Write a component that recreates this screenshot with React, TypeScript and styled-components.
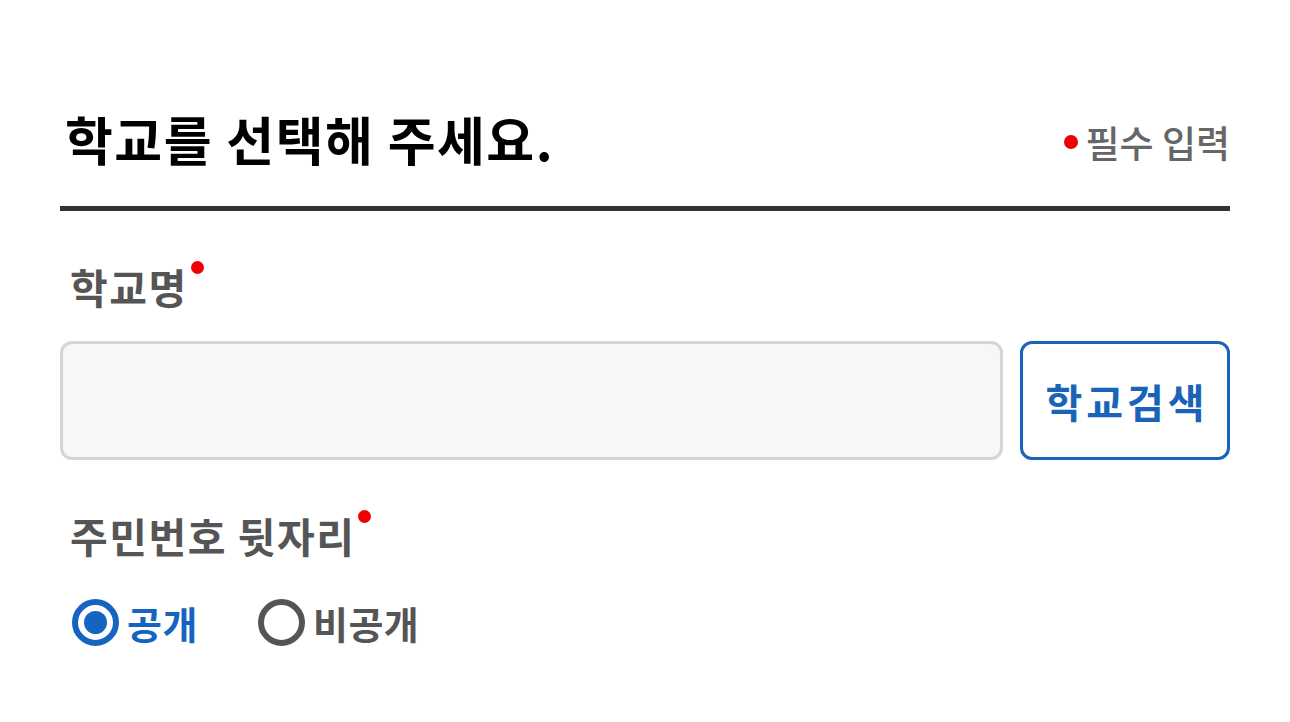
import styled, { createGlobalStyle } from "styled-components";

const GlobalStyle = createGlobalStyle`
  html, body {
    margin: 0;
    padding: 0;
    background: #ffffff;
    font-family: "Noto Sans CJK KR", "Noto Sans", sans-serif;
  }
`;

const Page = styled.div`
  width: 1170px;
  padding: 102px 60px 0;
`;

const Header = styled.div`
  display: flex;
  align-items: center;
  justify-content: space-between;
  padding-bottom: 30px;
  border-bottom: 5px solid #333333;
`;

const Title = styled.h1`
  margin: 0;
  font-size: 52px;
  font-weight: 700;
  letter-spacing: 1.5px;
  color: #000000;
  line-height: 74px;
  padding-left: 5px;
`;

const RequiredNote = styled.div`
  display: flex;
  align-items: center;
  gap: 8px;
  font-size: 37px;
  font-weight: 500;
  color: #666666;
  margin-top: 6px;
`;

const RedDot = styled.span<{ $size: number }>`
  display: inline-block;
  width: ${(p) => p.$size}px;
  height: ${(p) => p.$size}px;
  border-radius: 50%;
  background: #f00000;
  flex-shrink: 0;
`;

const Field = styled.div`
  display: flex;
  flex-direction: column;
`;

const Label = styled.div<{ $top: number }>`
  display: flex;
  align-items: flex-start;
  gap: 3px;
  margin-top: ${(p) => p.$top}px;
  padding-left: 10px;
  font-size: 41px;
  font-weight: 700;
  letter-spacing: 1.5px;
  color: #555555;
  line-height: 58px;

  ${RedDot} {
    margin-top: 4px;
  }
`;

const Row = styled.div`
  display: flex;
  gap: 17px;
  margin-top: 26px;
`;

const TextInput = styled.input`
  flex: 1;
  height: 119px;
  box-sizing: border-box;
  border: 3px solid #d5d5d5;
  border-radius: 12px;
  background: #f7f7f7;
  font-family: inherit;
  font-size: 36px;
  padding: 0 24px;
  outline: none;
`;

const SearchButton = styled.button`
  width: 210px;
  height: 119px;
  box-sizing: border-box;
  border: 3px solid #1a64b8;
  border-radius: 12px;
  background: #ffffff;
  color: #1a64b8;
  font-family: inherit;
  font-size: 40px;
  font-weight: 700;
  letter-spacing: 4px;
  padding: 0 0 0 4px;
  cursor: pointer;
`;

const RadioGroup = styled.div`
  display: flex;
  gap: 60px;
  margin-top: 31px;
  padding-left: 12px;
`;

const RadioOption = styled.label<{ $checked: boolean }>`
  display: flex;
  align-items: center;
  gap: 8px;
  font-size: 38px;
  font-weight: 700;
  letter-spacing: 0.5px;
  color: ${(p) => (p.$checked ? "#1565c0" : "#555555")};
  cursor: pointer;
`;

const RadioCircle = styled.span<{ $checked: boolean }>`
  display: flex;
  align-items: center;
  justify-content: center;
  width: 47px;
  height: 47px;
  box-sizing: border-box;
  border-radius: 50%;
  border: 6px solid ${(p) => (p.$checked ? "#1565c0" : "#555555")};

  &::after {
    content: "";
    display: ${(p) => (p.$checked ? "block" : "none")};
    width: 23px;
    height: 23px;
    border-radius: 50%;
    background: #1565c0;
  }
`;

export default function App() {
  return (
    <>
      <GlobalStyle />
      <Page>
        <Header>
          <Title>학교를 선택해 주세요.</Title>
          <RequiredNote>
            <RedDot $size={14} />
            필수 입력
          </RequiredNote>
        </Header>

        <Field>
          <Label $top={46}>
            학교명
            <RedDot $size={13} />
          </Label>
          <Row>
            <TextInput type="text" />
            <SearchButton type="button">학교검색</SearchButton>
          </Row>
        </Field>

        <Field>
          <Label $top={46}>
            주민번호 뒷자리
            <RedDot $size={13} />
          </Label>
          <RadioGroup>
            <RadioOption $checked={true}>
              <RadioCircle $checked={true} />
              공개
            </RadioOption>
            <RadioOption $checked={false}>
              <RadioCircle $checked={false} />
              비공개
            </RadioOption>
          </RadioGroup>
        </Field>
      </Page>
    </>
  );
}
